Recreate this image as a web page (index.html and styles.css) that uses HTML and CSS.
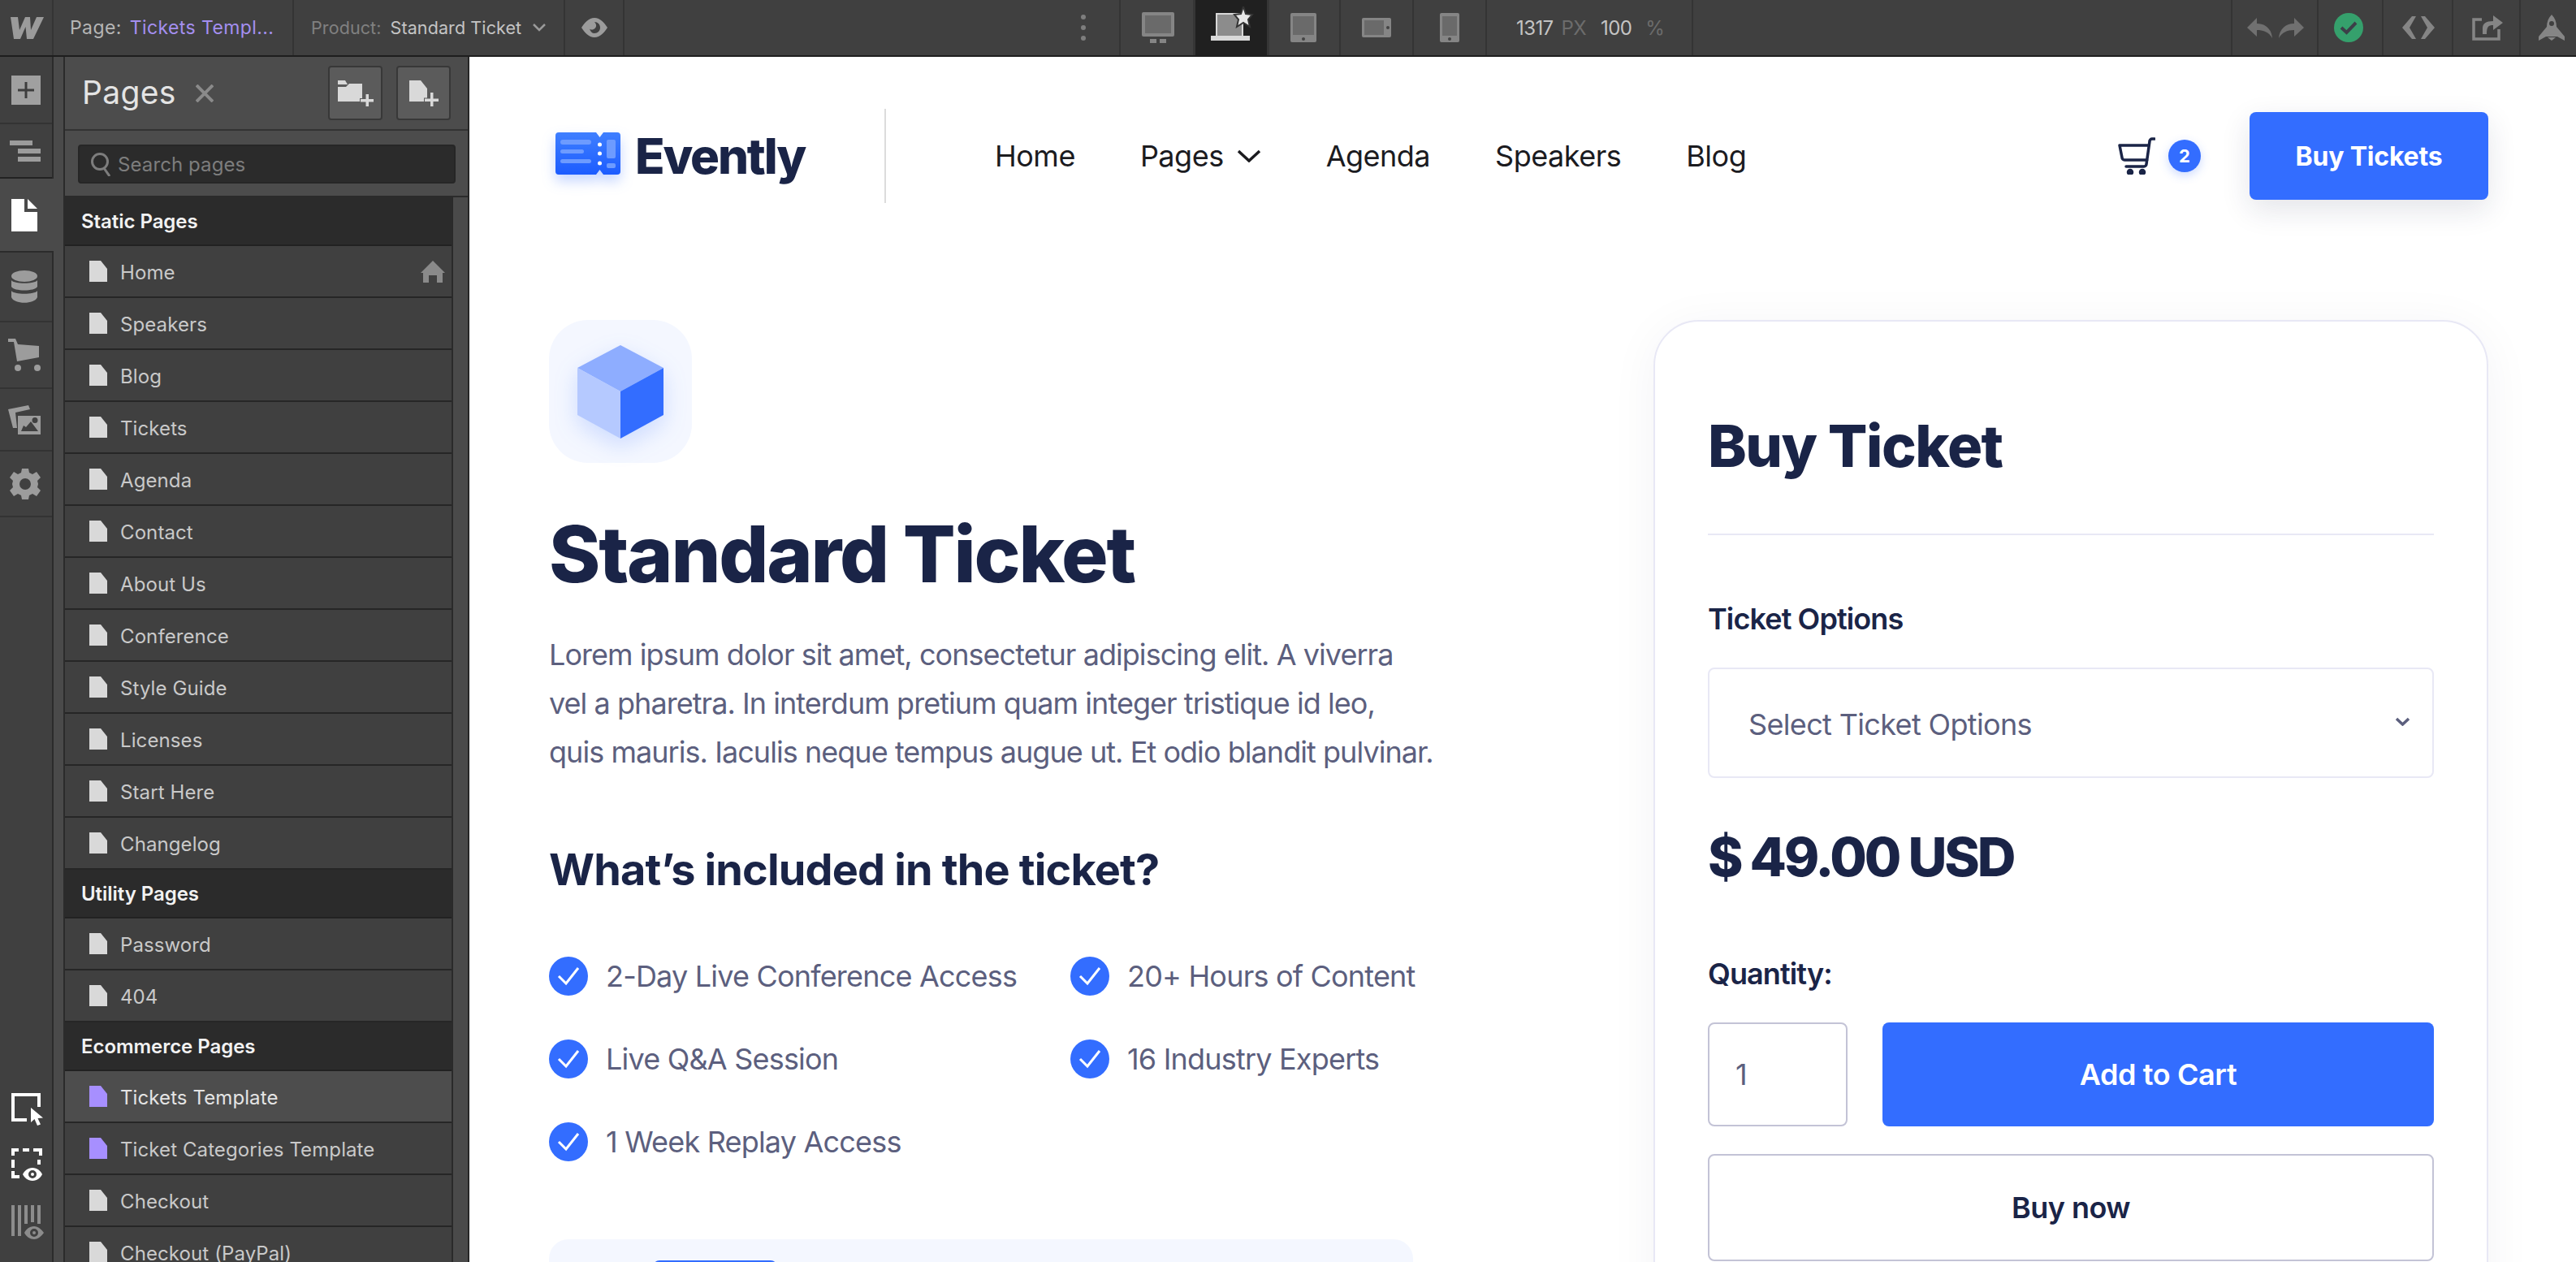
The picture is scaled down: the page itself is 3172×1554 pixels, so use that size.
FILE: index.html
```html
<!DOCTYPE html>
<html lang="en">
<head>
<meta charset="utf-8">
<title>Evently - Standard Ticket</title>
<link rel="stylesheet" href="styles.css">
</head>
<body>
<svg class="sprite" aria-hidden="true"><defs>
<symbol id="file" viewBox="0 0 22 26"><path d="M0 0H14L22 10V26H0Z"/></symbol>
</defs></svg>

<header class="topbar">
  <div class="seg seg-logo">
    <svg class="ico-w" viewBox="0 0 41 28"><path d="M0 1H9L11 17L18 1H24L25 17L32 1H41L28 28H20L18.5 13L12 28H4Z"/></svg>
  </div>
  <div class="seg seg-page"><span class="tb-dim">Page:</span><span class="tb-purple">Tickets Templ...</span></div>
  <div class="seg seg-product"><span class="tb-dimmer">Product:</span><span class="tb-val">Standard Ticket</span>
    <svg class="ico-chev" viewBox="0 0 16 10"><path d="M1 1L8 8L15 1"/></svg>
  </div>
  <div class="seg seg-eye">
    <svg class="ico-eye" viewBox="0 0 32 24"><path fill-rule="evenodd" d="M16 0C23 0 28 6 32 12C28 18 23 24 16 24C9 24 4 18 0 12C4 6 9 0 16 0ZM16 5C19 8 19 12 15 14C13 15 11 14.500 10 13.500C11 17 13 19 16 19C20 19 23 16 23 12C23 8 20 5 16 5Z"/></svg>
  </div>
  <div class="seg seg-fill-a"><span class="dots"><i></i><i></i><i></i></span></div>
  <div class="seg seg-dev">
    <svg class="dev dev-desk" viewBox="0 0 40 38"><rect width="40" height="30" rx="2" fill="#858585"/><rect x="4" y="4" width="32" height="22" fill="#6a6a6a"/><rect x="10" y="33" width="8" height="5" fill="#858585"/><rect x="22" y="33" width="8" height="5" fill="#858585"/></svg>
  </div>
  <div class="seg seg-dev-on">
    <svg class="dev dev-lap" viewBox="0 0 54 42"><path d="M7 42V9H39V42" fill="#8c8c8c" stroke="#d8d8d8" stroke-width="2"/><rect y="36" width="48" height="6" fill="#d8d8d8"/><path d="M40 0L43 9L51 10L46 16L48 25L40 20L32 25L34 16L29 10L37 9Z" fill="#e6e6e6" stroke="#333" stroke-width="2"/></svg>
  </div>
  <div class="seg seg-dev-b">
    <svg class="dev dev-tab" viewBox="0 0 32 36"><rect width="32" height="36" rx="2" fill="#858585"/><rect x="3" y="4" width="26" height="23" fill="#6a6a6a"/><circle cx="16" cy="32" r="2" fill="#444"/></svg>
  </div>
  <div class="seg seg-dev-c">
    <svg class="dev dev-land" viewBox="0 0 36 24"><rect width="36" height="24" rx="2" fill="#858585"/><rect x="3" y="3" width="24" height="18" fill="#6a6a6a"/><circle cx="32" cy="12" r="2" fill="#444"/></svg>
  </div>
  <div class="seg seg-dev-c">
    <svg class="dev dev-phone" viewBox="0 0 24 36"><rect width="24" height="36" rx="2" fill="#858585"/><rect x="3" y="4" width="18" height="24" fill="#6a6a6a"/><circle cx="12" cy="32" r="2" fill="#444"/></svg>
  </div>
  <div class="seg seg-size"><span class="tb-val">1317</span><span class="tb-unit">PX</span><span class="tb-val tb-gap">100</span><span class="tb-unit tb-pct">%</span></div>
  <div class="seg seg-fill-b"></div>
  <div class="seg seg-undo">
    <svg class="ico-undo" viewBox="0 0 31 25"><path d="M12 0V7C23 7 30 14 31 25C27 18 21 15 12 15V23L0 12Z"/></svg>
    <svg class="ico-undo" viewBox="0 0 31 25"><path d="M19 0V7C8 7 1 14 0 25C4 18 10 15 19 15V23L31 12Z"/></svg>
  </div>
  <div class="seg seg-check">
    <svg class="ico-ok" viewBox="0 0 36 36"><circle cx="18" cy="18" r="18" fill="#35a06c"/><path d="M9 18L15.500 24L27 12" fill="none" stroke="#3c3f48" stroke-width="4"/></svg>
  </div>
  <div class="seg seg-code">
    <svg class="ico-code" viewBox="0 0 40 28"><path d="M12 0H17L9 14L17 28H12L0 14Z"/><path d="M28 0H23L31 14L23 28H28L40 14Z"/></svg>
  </div>
  <div class="seg seg-share">
    <svg class="ico-share" viewBox="0 0 38 32"><path d="M12 6H2V30H33V18" fill="none" stroke="#858585" stroke-width="3.500"/><path d="M13 24V17C13 11 17 8 26 8V1L38 10L26 19V13C20 13 18 15 18 24Z" fill="#858585"/></svg>
  </div>
  <div class="seg seg-rocket">
    <svg class="ico-rocket" viewBox="0 0 32 32"><path fill-rule="evenodd" d="M16 0C20 4 22 9 22 15L32 27V32L23 27H9L0 32V27L10 15C10 9 12 4 16 0ZM16 8A3 3 0 1 0 16 14A3 3 0 1 0 16 8ZM11 28H21L16 32Z"/></svg>
  </div>
</header>

<div class="workspace">
  <nav class="rail">
    <div class="rail-item rail-add"><span class="add-tile"><svg viewBox="0 0 20 20"><path d="M8.500 0H11.500V8.500H20V11.500H11.500V20H8.500V11.500H0V8.500H8.500Z"/></svg></span></div>
    <div class="rail-item rail-nav"><svg class="r-nav" viewBox="0 0 38 26"><rect width="28" height="6"/><rect x="10" y="10" width="28" height="6"/><rect x="10" y="20" width="28" height="6"/></svg></div>
    <div class="rail-item rail-pages"><svg class="r-page" viewBox="0 0 32 40"><path d="M0 0H16V16H32V40H0Z"/><path d="M20 0L32 12H20Z"/></svg></div>
    <div class="rail-item rail-cms"><svg class="r-db" viewBox="0 0 32 40"><ellipse cx="16" cy="7" rx="16" ry="7"/><path d="M0 12C3 17 29 17 32 12V20C29 26 3 26 0 20Z"/><path d="M0 25C3 30 29 30 32 25V33C29 42 3 42 0 33Z"/></svg></div>
    <div class="rail-item rail-cart"><svg class="r-cart" viewBox="0 0 40 40"><path d="M0 0H9L12 7L38 9V23L11 28L7 4H0Z"/><circle cx="12" cy="36" r="4"/><circle cx="36" cy="36" r="4"/></svg></div>
    <div class="rail-item rail-assets"><svg class="r-img" viewBox="0 0 40 36"><path d="M0 5L25 0L27 5L9 9L11 28H6Z"/><path fill-rule="evenodd" d="M12 13H40V36H12ZM16 32H37L28 20L22 27L19 25ZM33 15A3.500 3.500 0 1 0 33 22A3.500 3.500 0 1 0 33 15Z"/></svg></div>
    <div class="rail-item rail-gear"><svg class="r-gear" viewBox="0 0 38 38"><path fill-rule="evenodd" d="M15 0H23L24 5L28 7L33 4L38 11L34 15L35 19L34 23L38 27L33 34L28 31L24 33L23 38H15L14 33L10 31L5 34L0 27L4 23L3 19L4 15L0 11L5 4L10 7L14 5ZM19 12A7 7 0 1 0 19 26A7 7 0 1 0 19 12Z"/></svg></div>
    <div class="rail-bottom">
      <svg class="r-sel" viewBox="0 0 40 40"><path d="M19 33H2V2H34V17" fill="none" stroke="#fff" stroke-width="4"/><path d="M24 18V36L28.500 32L32 40L36 38.500L32.500 31L39 30.500Z" fill="#fff"/></svg>
      <svg class="r-dash" viewBox="0 0 40 42"><path d="M0 2H9M14 2H22M27 2H36V9M2 2V9M2 14V24M34 14V20M2 28V35H10" fill="none" stroke="#fff" stroke-width="4"/><path fill-rule="evenodd" d="M26 24C32 24 36 28 38 32C36 36 32 40 26 40C20 40 16 36 14 32C16 28 20 24 26 24ZM26 27A5 5 0 1 0 26 37A5 5 0 1 0 26 27ZM26 30A2 2 0 1 1 26 34A2 2 0 1 1 26 30Z" fill="#fff"/></svg>
      <svg class="r-bars" viewBox="0 0 40 42"><path d="M0 0H4V38H0ZM8 0H12V38H8ZM16 0H20V23H16ZM24 0H28V21H24ZM32 0H36V23H32Z"/><path fill-rule="evenodd" d="M28 26C33 26 37 30 40 34C37 38 33 42 28 42C22 42 18 38 16 34C18 30 22 26 28 26ZM28 29A5 5 0 1 0 28 39A5 5 0 1 0 28 29ZM28 32A2 2 0 1 1 28 36A2 2 0 1 1 28 32Z"/></svg>
    </div>
  </nav>

  <aside class="panel-wrap">
    <div class="panel">
      <div class="panel-head">
        <span class="panel-title">Pages</span>
        <svg class="panel-x" viewBox="0 0 22 22"><path d="M1 1L21 21M21 1L1 21"/></svg>
        <span class="panel-btns">
          <span class="pbtn"><svg class="pb-ico" viewBox="0 0 44 32"><path d="M0 0H9L12 5H0ZM0 8H10L14 4H30V26H0Z" fill="#d9d9d9"/><path d="M34.500 17H38V23H44V26.500H38V32H34.500V26.500H28V23H34.500Z" fill="#d9d9d9" stroke="#5b5b5b" stroke-width="2" paint-order="stroke"/></svg></span>
          <span class="pbtn"><svg class="pb-ico" viewBox="0 0 36 32"><path d="M0 0H14L22 10V26H0Z" fill="#d9d9d9"/><path d="M26 15H29.500V22.500H36V26H29.500V32H26V26H19V22.500H26Z" fill="#d9d9d9" stroke="#5b5b5b" stroke-width="2" paint-order="stroke"/></svg></span>
        </span>
      </div>
      <div class="panel-search">
        <div class="search-box">
          <svg class="search-ico" viewBox="0 0 24 30"><circle cx="11" cy="12" r="9.500"/><path d="M16 20L23 30"/></svg>
          <span>Search pages</span>
        </div>
      </div>
      <div class="list-area">
        <div class="pages-list">
          <div class="grp">Static Pages</div>
          <div class="row"><svg class="file"><use href="#file"/></svg><span>Home</span>
            <svg class="home" viewBox="0 0 30 27"><path d="M15 0L30 15H27V27H20V18H10V27H3V15H0Z"/></svg></div>
          <div class="row"><svg class="file"><use href="#file"/></svg><span>Speakers</span></div>
          <div class="row"><svg class="file"><use href="#file"/></svg><span>Blog</span></div>
          <div class="row"><svg class="file"><use href="#file"/></svg><span>Tickets</span></div>
          <div class="row"><svg class="file"><use href="#file"/></svg><span>Agenda</span></div>
          <div class="row"><svg class="file"><use href="#file"/></svg><span>Contact</span></div>
          <div class="row"><svg class="file"><use href="#file"/></svg><span>About Us</span></div>
          <div class="row"><svg class="file"><use href="#file"/></svg><span>Conference</span></div>
          <div class="row"><svg class="file"><use href="#file"/></svg><span>Style Guide</span></div>
          <div class="row"><svg class="file"><use href="#file"/></svg><span>Licenses</span></div>
          <div class="row"><svg class="file"><use href="#file"/></svg><span>Start Here</span></div>
          <div class="row"><svg class="file"><use href="#file"/></svg><span>Changelog</span></div>
          <div class="grp">Utility Pages</div>
          <div class="row"><svg class="file"><use href="#file"/></svg><span>Password</span></div>
          <div class="row"><svg class="file"><use href="#file"/></svg><span>404</span></div>
          <div class="grp">Ecommerce Pages</div>
          <div class="row row-on"><svg class="file file-t"><use href="#file"/></svg><span>Tickets Template</span></div>
          <div class="row"><svg class="file file-t"><use href="#file"/></svg><span>Ticket Categories Template</span></div>
          <div class="row"><svg class="file"><use href="#file"/></svg><span>Checkout</span></div>
          <div class="row"><svg class="file"><use href="#file"/></svg><span>Checkout (PayPal)</span></div>
        </div>
      </div>
    </div>
  </aside>

  <main class="canvas">
    <div class="site-nav">
      <div class="brand">
        <svg class="brand-mark" viewBox="0 0 80 52">
          <defs><linearGradient id="lg" x1="0" y1="0" x2="0" y2="1"><stop offset="0" stop-color="#3f7fff"/><stop offset="1" stop-color="#1c5cff"/></linearGradient></defs>
          <path d="M4 0H50L54.500 6L59 0H76A4 4 0 0 1 80 4V48A4 4 0 0 1 76 52H59L54.500 46L50 52H4A4 4 0 0 1 0 48V4A4 4 0 0 1 4 0Z" fill="url(#lg)"/>
          <g fill="#6d9bff"><rect x="6" y="9" width="38" height="6" rx="3"/><rect x="6" y="21" width="29" height="5" rx="2.500"/><rect x="6" y="33" width="38" height="5" rx="2.500"/><rect x="63" y="9" width="11" height="23" rx="2"/><rect x="63" y="38" width="11" height="6" rx="2"/></g>
          <g fill="#fff"><circle cx="54.500" cy="15" r="2.500"/><circle cx="54.500" cy="26" r="2.500"/><circle cx="54.500" cy="38" r="2.500"/></g>
        </svg>
        <span class="brand-name">Evently</span>
      </div>
      <div class="nav-rule"></div>
      <div class="nav-links">
        <span class="nav-link">Home</span>
        <span class="nav-link">Pages<svg class="nav-chev" viewBox="0 0 30 16"><path d="M2 2L15 14L28 2"/></svg></span>
        <span class="nav-link">Agenda</span>
        <span class="nav-link">Speakers</span>
        <span class="nav-link">Blog</span>
      </div>
      <div class="nav-right">
        <svg class="cart" viewBox="0 0 46 46"><path d="M45 2H42A3 3 0 0 0 39 5L35 33A3 3 0 0 1 32 36H10M2 10H38M2 10L5 25A3 3 0 0 0 8 28H36"/><circle cx="15" cy="43" r="2.500"/><circle cx="30" cy="43" r="2.500"/></svg>
        <span class="cart-badge">2</span>
        <span class="btn-top">Buy Tickets</span>
      </div>
    </div>

    <div class="content">
      <section class="left">
        <div class="cube-tile">
          <svg class="cube" viewBox="0 0 106 115"><path d="M53 0L106 28L53 57L0 28Z" fill="#8eadff"/><path d="M0 28L53 57V115L0 86Z" fill="#b5c9ff"/><path d="M106 28L53 57V115L106 86Z" fill="#336dff"/></svg>
        </div>
        <h1 class="h1">Standard Ticket</h1>
        <p class="lead">Lorem ipsum dolor sit amet, consectetur adipiscing elit. A viverra<br>vel a pharetra. In interdum pretium quam integer tristique id leo,<br>quis mauris. Iaculis neque tempus augue ut. Et odio blandit pulvinar.</p>
        <h2 class="h2">What’s included in the ticket?</h2>
        <ul class="incl">
          <li><svg class="tick" viewBox="0 0 48 48"><circle cx="24" cy="24" r="24"/><path d="M12 24L21 33L36 14"/></svg>2-Day Live Conference Access</li>
          <li><svg class="tick" viewBox="0 0 48 48"><circle cx="24" cy="24" r="24"/><path d="M12 24L21 33L36 14"/></svg>20+ Hours of Content</li>
          <li><svg class="tick" viewBox="0 0 48 48"><circle cx="24" cy="24" r="24"/><path d="M12 24L21 33L36 14"/></svg>Live Q&amp;A Session</li>
          <li><svg class="tick" viewBox="0 0 48 48"><circle cx="24" cy="24" r="24"/><path d="M12 24L21 33L36 14"/></svg>16 Industry Experts</li>
          <li><svg class="tick" viewBox="0 0 48 48"><circle cx="24" cy="24" r="24"/><path d="M12 24L21 33L36 14"/></svg>1 Week Replay Access</li>
        </ul>
        <div class="promo"><div class="promo-chip"></div></div>
      </section>

      <section class="buy">
        <h3 class="buy-title">Buy Ticket</h3>
        <div class="buy-rule"></div>
        <div class="lbl lbl-opt">Ticket Options</div>
        <div class="select"><span class="select-text">Select Ticket Options</span><svg class="sel-chev" viewBox="0 0 19 11"><path d="M2 2L9.500 9L17 2"/></svg></div>
        <div class="price">$ 49.00 USD</div>
        <div class="lbl lbl-qty">Quantity:</div>
        <div class="qty-row">
          <div class="qty">1</div>
          <div class="btn-add">Add to Cart</div>
        </div>
        <div class="btn-now">Buy now</div>
      </section>
    </div>
  </main>
</div>
</body>
</html>
```
FILE: styles.css
```css
* { box-sizing: border-box; }
html, body { margin: 0; height: 100%; }
body {
  width: 3172px; height: 1554px; overflow: hidden;
  display: flex; flex-direction: column;
  font-family: "Inter", "Liberation Sans", sans-serif;
  background: #404040;
}
.sprite { width: 0; height: 0; display: block; }

/* top toolbar */
.topbar {
  height: 70px; flex: none; display: flex; background: #404040;
  border-bottom: 2px solid #1e1e1e;
}
.seg {
  flex: none; height: 68px; display: flex; align-items: center;
  border-right: 2px solid #343434; font-size: 23px; letter-spacing: .2px;
}
.seg-logo { width: 66px; padding-left: 13px; }
.ico-w { width: 41px; height: 28px; fill: #9b9b9b; }
.seg-page { width: 296px; padding-left: 20px; gap: 10px; letter-spacing: .4px; }
.tb-dim { color: #b5b5b5; }
.tb-purple { color: #a48ff0; }
.seg-product { width: 334px; padding-left: 21px; gap: 11px; font-size: 21.5px; letter-spacing: .1px; }
.tb-dimmer { color: #808080; }
.tb-val { color: #c4c4c4; }
.ico-chev { width: 16px; height: 10px; fill: none; stroke: #9a9a9a; stroke-width: 2.500; margin-left: 3px; }
.seg-eye { width: 73px; padding-left: 20px; }
.ico-eye { width: 32px; height: 24px; fill: #9c9c9c; }
.seg-fill-a { width: 611px; justify-content: flex-end; padding-right: 41px; }
.dots { display: flex; flex-direction: column; gap: 7px; }
.dots i { width: 6px; height: 6px; border-radius: 50%; background: #7e7e7e; display: block; }
.seg-dev, .seg-dev-b, .seg-dev-c, .seg-dev-on { justify-content: center; }
.seg-dev { width: 92px; border-right: 0; }
.seg-dev-on { width: 88px; background: #202020; border-right: 0; box-shadow: -3px 0 0 #363636, 3px 0 0 #363636; }
.seg-dev-b { width: 91px; }
.seg-dev-c { width: 90px; }
.dev-desk { width: 40px; height: 38px; }
.dev-lap { width: 54px; height: 42px; margin: -10px 0 0 4px; }
.dev-tab { width: 32px; height: 36px; }
.dev-land { width: 36px; height: 24px; }
.dev-phone { width: 24px; height: 36px; }
.seg-size { width: 254px; padding-left: 36px; gap: 10px; letter-spacing: -.6px; font-size: 24px; }
.tb-unit { color: #6c6c6c; }
.tb-gap { margin-left: 8px; }
.tb-pct { margin-left: 7px; }
.seg-fill-b { width: 664px; }
.seg-undo { width: 106px; padding-left: 18px; gap: 8px; }
.ico-undo { width: 31px; height: 25px; fill: #707070; }
.seg-check { width: 80px; padding-left: 19px; }
.ico-ok { width: 36px; height: 36px; }
.seg-code { width: 86px; padding-left: 23px; }
.ico-code { width: 40px; height: 28px; fill: #858585; }
.seg-share { width: 83px; padding-left: 23px; }
.ico-share { width: 38px; height: 32px; }
.seg-rocket { width: 68px; padding-left: 22px; border-right: 0; }
.ico-rocket { width: 32px; height: 32px; fill: #858585; }

.workspace { flex: 1; display: flex; min-height: 0; }

/* left rail */
.rail {
  width: 66px; flex: none; display: flex; flex-direction: column;
  background: #404040; border-right: 2px solid #2b2b2b;
}
.rail-item {
  flex: none; display: flex; align-items: center; padding-left: 12px;
  border-bottom: 2px solid #333;
}
.rail-add { height: 83px; padding-left: 14px; }
.add-tile { width: 36px; height: 36px; background: #a0a0a0; display: flex; align-items: center; justify-content: center; }
.add-tile svg { width: 20px; height: 20px; fill: #3e3e3e; }
.rail-nav { height: 67px; border-bottom-color: #222; margin-right: 0; }
.r-nav { width: 38px; height: 26px; fill: #9c9c9c; }
.rail-pages { height: 91px; background: #4a4a4a; margin-right: -2px; padding-left: 14px; border-bottom-color: #2b2b2b; }
.r-page { width: 32px; height: 40px; fill: #fff; }
.rail-cms { height: 86px; padding-left: 14px; }
.r-db { width: 32px; height: 40px; fill: #9c9c9c; }
.rail-cart { height: 82px; padding-left: 10px; }
.r-cart { width: 40px; height: 40px; fill: #9c9c9c; }
.rail-assets { height: 77px; padding-left: 10px; }
.r-img { width: 40px; height: 36px; fill: #9c9c9c; }
.rail-gear { height: 81px; }
.r-gear { width: 38px; height: 38px; fill: #9c9c9c; }
.rail-bottom { margin-top: auto; padding: 0 0 28px 14px; display: flex; flex-direction: column; gap: 28px; }
.r-sel { width: 40px; height: 40px; }
.r-dash { width: 40px; height: 42px; }
.r-bars { width: 40px; height: 42px; fill: #8c8c8c; }

/* pages panel */
.panel-wrap {
  width: 512px; flex: none; padding-left: 12px; background: #4a4a4a;
  border-right: 2px solid #262626; height: 1484px;
}
.panel { height: 100%; display: flex; flex-direction: column; border-left: 2px solid #2b2b2b; }
.panel-head {
  height: 91px; flex: none; display: flex; align-items: center; padding-left: 21px;
  border-bottom: 2px solid #333; background: #4c4c4c;
}
.panel-title { font-size: 39px; color: #e4e4e4; letter-spacing: .3px; margin-top: -2px; }
.panel-x { width: 22px; height: 22px; stroke: #8a8a8a; stroke-width: 4; margin-left: 24px; fill: none; }
.panel-btns { margin-left: auto; display: flex; gap: 17px; padding-right: 21px; }
.pbtn {
  width: 67px; height: 67px; display: flex; align-items: center; justify-content: center;
  background: #5b5b5b; border: 2px solid #383838; border-radius: 4px;
}
.pb-ico { height: 32px; width: 44px; }
.pbtn + .pbtn .pb-ico { width: 36px; }
.panel-search { height: 82px; flex: none; padding: 17px 0 0 16px; border-bottom: 2px solid #2b2b2b; background: #4c4c4c; }
.search-box {
  width: 465px; height: 48px; background: #2b2b2b; border: 2px solid #262626; border-radius: 4px;
  display: flex; align-items: center; padding-left: 14px; gap: 9px;
  color: #7d7d7d; font-size: 24px; letter-spacing: .1px;
}
.search-ico { width: 24px; height: 30px; fill: none; stroke: #7d7d7d; stroke-width: 3; }
.list-area { flex: 1; min-height: 0; overflow: hidden; padding-right: 18px; }
.pages-list { background: #404040; border-right: 2px solid #2a2a2a; }
.grp {
  height: 60px; background: #2b2b2b; border-bottom: 2px solid #222;
  display: flex; align-items: center; padding-left: 20px;
  color: #f2f2f2; font-size: 24px; font-weight: 600; letter-spacing: -.05px;
}
.row {
  height: 64px; display: flex; align-items: center; padding: 0 8px 0 30px; gap: 16px;
  border-bottom: 2px solid #262626; color: #c9c9c9; font-size: 24px; letter-spacing: .1px;
}
.row span { margin-top: 2px; }
.row-on { background: #4d4d4d; color: #e4e4e4; }
.file { width: 22px; height: 26px; fill: #d9d9d9; flex: none; }
.file-t { fill: #a78fff; }
.home { width: 30px; height: 27px; fill: #8a8a8a; margin-left: auto; }

/* canvas */
.canvas { flex: 1; min-width: 0; background: #fff; overflow: hidden; height: 1484px; }
.site-nav { height: 244px; display: flex; align-items: center; padding: 0 108px 0 106px; }
.brand { display: flex; align-items: center; gap: 18px; width: 405px; }
.brand-mark { width: 80px; height: 52px; filter: drop-shadow(0 8px 8px rgba(51,109,255,.28)); margin-top: -6px; }
.brand-name { font-size: 60px; font-weight: 800; color: #1a2447; letter-spacing: -2.2px; }
.nav-rule { width: 2px; height: 116px; background: #dcdcdc; }
.nav-links { display: flex; align-items: center; gap: 80px; margin-left: 134px; }
.nav-link { font-size: 36px; color: #1b1b1f; letter-spacing: -.5px; display: flex; align-items: center; gap: 16px; }
.nav-chev { width: 30px; height: 16px; fill: none; stroke: #1b1b1f; stroke-width: 3.500; }
.nav-right { margin-left: auto; display: flex; align-items: center; }
.cart { width: 46px; height: 46px; fill: #1a2447; stroke: #1a2447; stroke-width: 3.500; stroke-linecap: round; stroke-linejoin: round; }
.cart path { fill: none; }
.cart-badge {
  width: 40px; height: 40px; border-radius: 50%; background: #336dff; color: #fff; margin-left: 16px;
  display: flex; align-items: center; justify-content: center; font-size: 22px; font-weight: 700;
  box-shadow: 0 4px 12px rgba(51,109,255,.25);
}
.btn-top {
  margin-left: 60px; width: 294px; height: 108px; border-radius: 8px; background: #336dff; color: #fff;
  display: flex; align-items: center; justify-content: center; font-size: 32px; font-weight: 700; letter-spacing: -.2px;
  box-shadow: 0 12px 36px rgba(26,36,71,.12);
}

.content { display: flex; justify-content: space-between; padding: 80px 108px 0 98px; }
.left { width: 1100px; }
.cube-tile {
  width: 176px; height: 176px; border-radius: 48px; background: #f4f7ff;
  display: flex; align-items: center; justify-content: center;
}
.cube { width: 106px; height: 115px; filter: drop-shadow(0 10px 14px rgba(51,109,255,.2)); }
.h1 { margin: 52px 0 0; font-size: 96px; line-height: 120px; font-weight: 800; color: #1a2447; letter-spacing: -2.2px; }
.lead { margin: 34px 0 0; font-size: 36px; line-height: 60px; color: #5c5f7e; letter-spacing: -.95px; white-space: nowrap; }
.h2 { margin: 80px 0 0; font-size: 54px; line-height: 70px; font-weight: 700; color: #1a2447; letter-spacing: -.85px; }
.incl { list-style: none; margin: 72px 0 0; padding: 0; display: grid; grid-template-columns: 642px 1fr; grid-auto-rows: 102px; }
.incl li { display: flex; align-items: flex-start; gap: 22px; font-size: 36px; line-height: 48px; color: #5c5f7e; letter-spacing: -.8px; white-space: nowrap; }
.tick { width: 48px; height: 48px; flex: none; }
.tick circle { fill: #336dff; }
.tick path { fill: none; stroke: #fff; stroke-width: 3; }
.promo { width: 1064px; height: 200px; margin-top: 42px; background: #f4f7ff; border-radius: 24px 24px 0 0; padding: 26px 0 0 128px; }
.promo-chip { width: 153px; height: 60px; background: #336dff; border-radius: 8px; }

.buy {
  width: 1028px; height: 1400px; padding: 108px 65px 0 65px; border: 2px solid #e8e8f5; border-radius: 56px;
  background: #fff; box-shadow: 0 8px 60px rgba(26,36,71,.05);
}
.buy-title { margin: 0; font-size: 72px; line-height: 90px; font-weight: 800; color: #1a2447; letter-spacing: -1.5px; }
.buy-rule { height: 2px; background: #e8e8f5; margin-top: 63px; }
.lbl { font-size: 36px; line-height: 48px; font-weight: 600; color: #1a2447; letter-spacing: -.9px; }
.lbl-opt { margin-top: 79px; }
.select {
  height: 136px; margin-top: 36px; border: 2px solid #e8e8f5; border-radius: 8px;
  display: flex; align-items: center; justify-content: space-between; padding: 0 27px 0 48px;
  font-size: 36px; color: #5c5f7e; letter-spacing: -.65px;
}
.select-text { margin-top: 4px; }
.sel-chev { width: 19px; height: 11px; fill: none; stroke: #5c5f7e; stroke-width: 3.500; margin-top: -4px; }
.price { margin-top: 57px; font-size: 66px; line-height: 80px; font-weight: 800; color: #1a2447; letter-spacing: -3.2px; }
.lbl-qty { margin-top: 80px; }
.qty-row { display: flex; gap: 43px; margin-top: 36px; }
.qty {
  width: 172px; height: 128px; border: 2px solid #c3c3d6; border-radius: 8px; padding-left: 32px;
  display: flex; align-items: center; font-size: 36px; color: #5c5f7e;
}
.btn-add {
  flex: 1; height: 128px; border-radius: 8px; background: #336dff; color: #fff;
  display: flex; align-items: center; justify-content: center; font-size: 36px; font-weight: 600; letter-spacing: -.4px;
}
.btn-now {
  height: 132px; margin-top: 34px; border: 2px solid #c3c3d6; border-radius: 8px;
  display: flex; align-items: center; justify-content: center; font-size: 36px; font-weight: 600; color: #1a2447; letter-spacing: -.5px;
}
```
